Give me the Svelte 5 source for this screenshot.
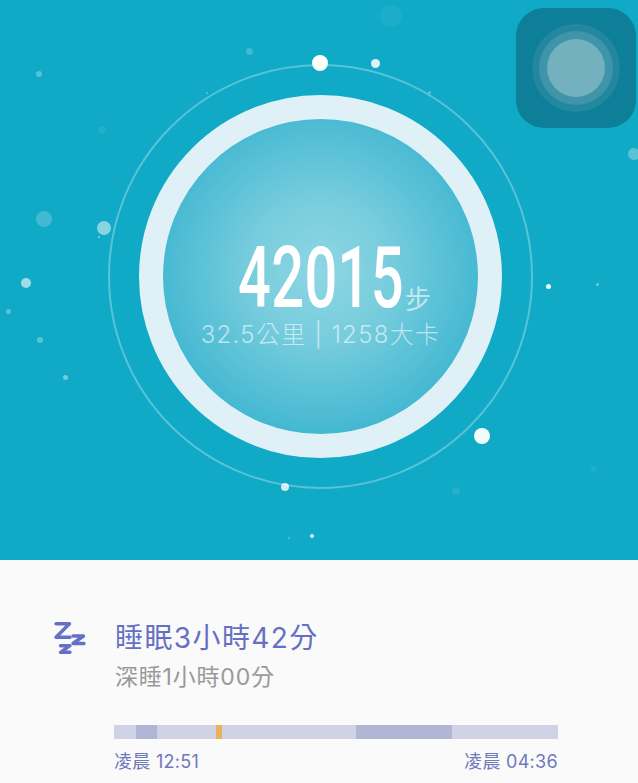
<script lang="ts">
  // x, y, r, opacity on the hero canvas
  const particles = [
    [249, 51, 3.5, 0.2], [39, 74, 3, 0.3], [102, 130, 4, 0.08], [44, 219, 8, 0.2],
    [104, 228, 7, 0.5], [99, 237, 1, 0.5], [26, 283, 5, 0.6], [8, 311, 2.5, 0.3],
    [40, 340, 3, 0.3], [65, 377, 2.5, 0.4], [285, 487, 4, 0.8], [312, 536, 2, 0.8],
    [289, 538, 1, 0.3], [375, 63, 4.5, 0.85], [391, 16, 11, 0.05], [429, 92, 1.5, 0.3],
    [207, 93, 1, 0.3], [634, 154, 6, 0.3], [548, 286, 2.5, 0.9], [597, 284, 1.5, 0.4],
    [482, 436, 8, 0.95], [456, 491, 4, 0.08], [593, 469, 3, 0.05],
  ];

  const segments = [
    { w: 22, tone: 'light' },
    { w: 21, tone: 'deep' },
    { w: 59, tone: 'light' },
    { w: 6, tone: 'awake' },
    { w: 134, tone: 'light' },
    { w: 96, tone: 'deep' },
    { w: 106, tone: 'light' },
  ];
</script>

<div class="page">
  <section class="hero">
    {#each particles as [x, y, r, o]}
      <span class="dot" style="left:{x - r}px;top:{y - r}px;width:{r * 2}px;height:{r * 2}px;opacity:{o}"></span>
    {/each}

    <div class="disc">
      <span class="orbit"></span>
      <span class="orbit-dot"></span>
      <div class="steps">
        <span class="count">42015</span><span class="unit">步</span>
      </div>
      <div class="stats">32.5公里 | 1258大卡</div>
    </div>

    <div class="touch">
      <span class="touch-a"><span class="touch-b"><span class="touch-c"></span></span></span>
    </div>
  </section>

  <section class="sleep">
    <div class="head">
      <svg class="zzz" width="34" height="36" viewBox="0 0 34 36" fill="none" stroke="#6570c4" stroke-width="3.4" stroke-linejoin="round" stroke-linecap="round">
        <path d="M4 4.700h13.500L4 18.300h14" />
        <path d="M21 17h10.500L21 24.500h11" />
        <path d="M8.500 26.700h9.500L8.500 33.300h9.500" />
      </svg>
      <div>
        <div class="title">睡眠3小時42分</div>
        <div class="subtitle">深睡1小時00分</div>
      </div>
    </div>
    <div class="bar">
      {#each segments as s}
        <span class={s.tone} style="width:{s.w}px"></span>
      {/each}
    </div>
    <div class="times">
      <span>凌晨 12:51</span>
      <span>凌晨 04:36</span>
    </div>
  </section>
</div>

<style>
  :global(body) {
    margin: 0;
    background: #fafafa;
  }

  .page {
    width: 638px;
    height: 783px;
    overflow: hidden;
    font-family: Inter, "Noto Sans CJK TC", sans-serif;
  }

  .hero {
    position: relative;
    height: 560px;
    box-sizing: border-box;
    padding-top: 95px;
    background: #10a9c6;
    overflow: hidden;
  }

  .dot {
    position: absolute;
    border-radius: 50%;
    background: #fff;
  }

  .disc {
    position: relative;
    box-sizing: border-box;
    width: 363px;
    height: 363px;
    margin-left: 139px;
    padding-top: 129px;
    border: 24px solid #dff1f7;
    border-radius: 50%;
    background: radial-gradient(circle 172px at 50% 48%, #8ed6e3 0%, #78cddd 40%, #3fb6d1 100%);
    color: #fff;
    text-align: center;
  }

  .orbit {
    position: absolute;
    inset: -55px;
    border: 2px solid rgba(255, 255, 255, 0.3);
    border-radius: 50%;
  }

  .orbit-dot {
    position: absolute;
    left: 149px;
    top: -64px;
    width: 16px;
    height: 16px;
    border-radius: 50%;
    background: #fff;
  }

  .steps {
    display: flex;
    align-items: flex-end;
    height: 60px;
    padding-left: 75px;
  }

  .count {
    display: block;
    width: 164px;
    height: 60px;
    font-family: Roboto, sans-serif;
    font-size: 85px;
    font-weight: 500;
    line-height: 60px;
    letter-spacing: 0.5px;
    white-space: nowrap;
    text-align: left;
    transform: scaleX(0.68);
    transform-origin: left center;
  }

  .unit {
    margin-left: 3px;
    font-family: "Noto Sans CJK TC", sans-serif;
    font-size: 26px;
    line-height: 30px;
    margin-bottom: -5px;
    color: rgba(255, 255, 255, 0.6);
  }

  .stats {
    margin-top: 11px;
    font-size: 24px;
    font-weight: 300;
    line-height: 32px;
    letter-spacing: 1.3px;
    white-space: nowrap;
    color: rgba(255, 255, 255, 0.6);
  }

  .touch {
    position: absolute;
    left: 516px;
    top: 8px;
    display: flex;
    align-items: center;
    justify-content: center;
    width: 120px;
    height: 120px;
    border-radius: 28px;
    background: #0e7f98;
  }

  .touch span {
    display: flex;
    align-items: center;
    justify-content: center;
    border-radius: 50%;
  }

  .touch-a {
    width: 88px;
    height: 88px;
    background: #23879f;
  }

  .touch-b {
    width: 74px;
    height: 74px;
    background: #3f94a9;
  }

  .touch-c {
    width: 58px;
    height: 58px;
    background: #74b1bf;
  }

  .sleep {
    height: 223px;
    box-sizing: border-box;
    padding: 58px 80px 0 114px;
    background: #fafafa;
  }

  .head {
    position: relative;
    height: 107px;
  }

  .zzz {
    position: absolute;
    left: -62px;
    top: 1px;
  }

  .title {
    margin-left: 1px;
    font-size: 28px;
    line-height: 41px;
    letter-spacing: 1.4px;
    color: #6570c4;
    white-space: nowrap;
  }

  .subtitle {
    margin-left: 1px;
    font-size: 23px;
    line-height: 37px;
    letter-spacing: 0.8px;
    color: #999;
    white-space: nowrap;
  }

  .bar {
    display: flex;
    width: 444px;
    height: 14px;
  }

  .bar span {
    display: block;
  }

  .light {
    background: #d0d3e6;
  }

  .deep {
    background: #b1b5d6;
  }

  .awake {
    background: #e9b15c;
  }

  .times {
    display: flex;
    justify-content: space-between;
    width: 444px;
    margin-top: 11px;
    font-size: 18px;
    line-height: 24px;
    letter-spacing: 0.3px;
    color: #6f79bd;
  }
</style>
